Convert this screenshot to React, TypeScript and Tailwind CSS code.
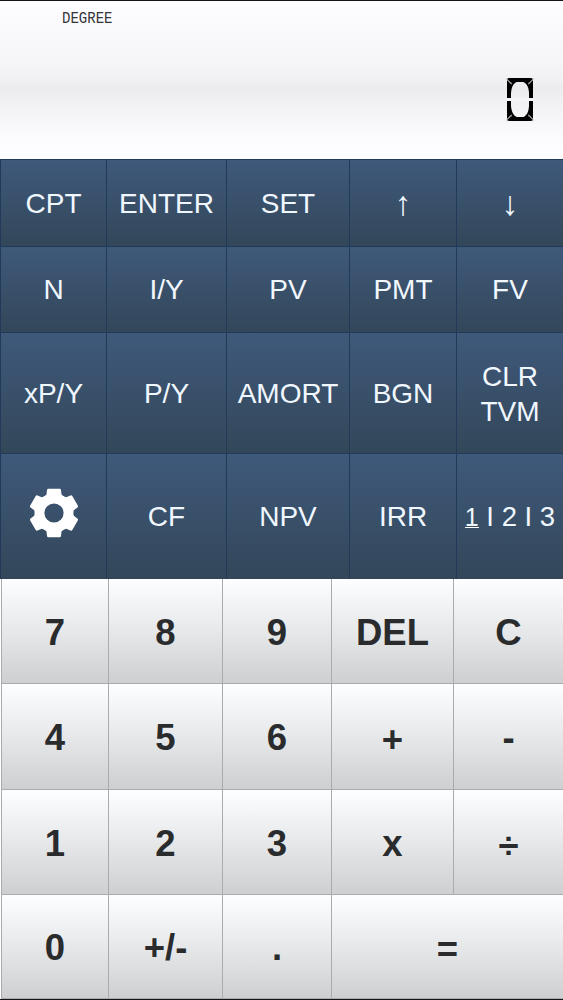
import type { ReactNode } from 'react';
import clsx from 'clsx';

const GearIcon = () => (
    <svg width="50" height="50" viewBox="-25 -25 50 50" fill="white" className="mb-[7px]">
        <circle r="14" fill="none" stroke="white" strokeWidth="8.8" />
        {[0, 60, 120, 180, 240, 300].map((angle) => (
            <path
                key={angle}
                transform={`rotate(${angle})`}
                d="M-5.5 -24.3H5.5Q6.9 -24.3 7 -23L7.5 -18.5L11 -15.5L6 -11H-6L-11 -15.5L-7.5 -18.5L-7 -23Q-6.9 -24.3 -5.5 -24.3Z"
            />
        ))}
    </svg>
);

const pages = (
    <span className="whitespace-nowrap text-[27.5px]">
        <span className="text-[25px] border-b border-white inline-block leading-[20px]">1</span> I 2 I 3
    </span>
);

const functionKeys: { id: string; label: ReactNode }[] = [
    { id: 'cpt', label: 'CPT' },
    { id: 'enter', label: 'ENTER' },
    { id: 'set', label: 'SET' },
    { id: 'up', label: <span className="text-[34px]">↑</span> },
    { id: 'down', label: <span className="text-[34px]">↓</span> },
    { id: 'n', label: 'N' },
    { id: 'iy', label: 'I/Y' },
    { id: 'pv', label: 'PV' },
    { id: 'pmt', label: 'PMT' },
    { id: 'fv', label: 'FV' },
    { id: 'xpy', label: 'xP/Y' },
    { id: 'py', label: 'P/Y' },
    { id: 'amort', label: 'AMORT' },
    { id: 'bgn', label: 'BGN' },
    { id: 'clr', label: <span className="pt-[2px]">CLR<br />TVM</span> },
    { id: 'settings', label: <GearIcon /> },
    { id: 'cf', label: 'CF' },
    { id: 'npv', label: 'NPV' },
    { id: 'irr', label: 'IRR' },
    { id: 'pages', label: pages },
];

const numberKeys = ['7', '8', '9', 'DEL', 'C', '4', '5', '6', '+', '-', '1', '2', '3', 'x', '÷', '0', '+/-', '.', '='];
const lowKeys = ['+', '÷', '='];

export default function App() {
    return (
        <main className="w-[563px] h-[1000px] flex flex-col overflow-hidden border-y border-[#17121b] bg-white font-['Liberation_Sans',Arial,sans-serif]">
            <div className="h-[158px] shrink-0 flex flex-col justify-between bg-linear-[180deg,#fefdff_0%,#f5f4f7_40%,#f2f1f4_49%,#ecebee_55%,#f2f1f3_66%,#fbfafc_84%,#fefdff_100%]">
                <span className="ml-[62px] mt-[8px] h-5 leading-5 text-[17px] text-[#343438] origin-left scale-x-[0.825] self-start font-['Liberation_Mono',monospace]">DEGREE</span>

                <div className="relative self-end mr-[30px] mb-[38px] w-[26px] h-[43px] flex justify-center items-center">
                    <span className="text-[58px] leading-none font-light text-black scale-x-[0.98] font-['Roboto',sans-serif]">0</span>
                    {/* lcd segments: frame, mitred corners, side gaps */}
                    <span className="absolute inset-0 border-[4.5px] border-black rounded-[2px]" />
                    <span className="absolute -left-px top-0 w-[8px] h-px origin-left rotate-45 bg-[#c9c9cb]" />
                    <span className="absolute -right-px top-0 w-[8px] h-px origin-right -rotate-45 bg-[#c9c9cb]" />
                    <span className="absolute -left-px bottom-0 w-[8px] h-px origin-left -rotate-45 bg-[#c9c9cb]" />
                    <span className="absolute -right-px bottom-0 w-[8px] h-px origin-right rotate-45 bg-[#c9c9cb]" />
                    <span className="absolute left-0 top-[20px] w-full h-[3px] bg-[#f5f4f6]" />
                </div>
            </div>

            <div className="h-[420px] shrink-0 grid grid-cols-[106px_120px_123px_107px_107px] grid-rows-[87px_86px_121px_126px] border-b border-[#8b98a8]">
                {functionKeys.map(({ id, label }) => (
                    <button key={id} className="flex justify-center items-center text-center text-[28px] leading-[35px] text-[#f1f7ff] border-l border-t border-[#223a59] bg-linear-to-b from-[#3f597b] to-[#334759]">
                        {label}
                    </button>
                ))}
            </div>

            <div className="h-[420px] shrink-0 grid grid-cols-[107px_114px_109px_122px_110px] grid-rows-[105px_106px_105px_104px] pl-px">
                {numberKeys.map((key) => (
                    <button
                        key={key}
                        className={clsx(
                            'flex justify-center items-center text-[36.5px] font-bold text-[#2a2b2d] border-l border-b border-[#a9abad] bg-linear-to-b from-[#fdfeff] via-[#e7e8ea] to-[#cecfd1] last:col-span-2',
                            lowKeys.includes(key) ? 'pt-[8px]' : 'pt-[4px]'
                        )}
                    >
                        {key}
                    </button>
                ))}
            </div>
        </main>
    );
}
